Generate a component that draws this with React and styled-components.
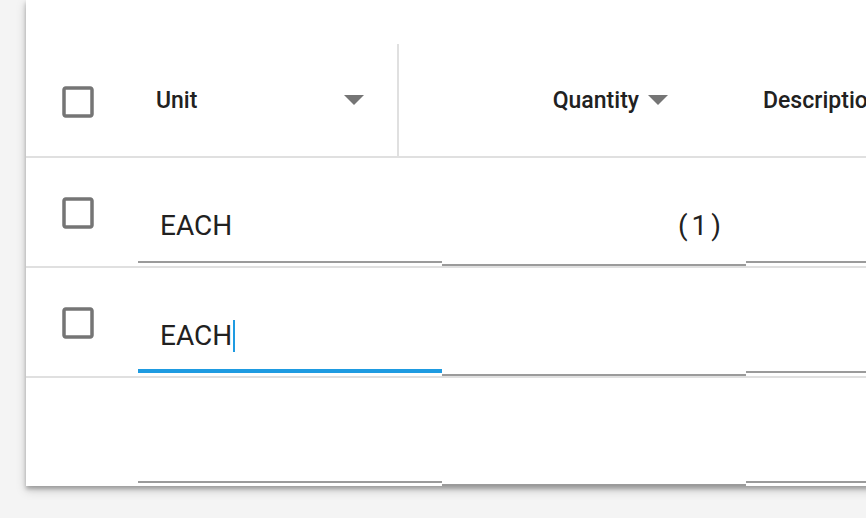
import styled, { createGlobalStyle } from "styled-components"

const GlobalStyle = createGlobalStyle`
    html, body {
        margin: 0;
        background: #f4f4f4;
        font-family: Roboto, "Noto Sans", sans-serif;
        overflow: hidden;
    }
    body {
        min-height: 518px;
    }
`

const Page = styled.div`
    padding: 0 0 32px 26px;
`

const Card = styled.div`
    width: 1000px;
    padding-top: 44px;
    background: #fff;
    box-shadow: 0 4px 10px rgba(0, 0, 0, 0.18), 0 3px 4px rgba(0, 0, 0, 0.26);
`

const HeaderRow = styled.div`
    display: flex;
    height: 112px;
    border-bottom: 2px solid #e0e0e0;
`

const HeadCheck = styled.div`
    width: 104px;
    padding-left: 30.75px;
    box-sizing: border-box;
    display: flex;
    align-items: center;
    padding-top: 4px;
`

const HeadCell = styled.div`
    display: flex;
    align-items: center;
    box-sizing: border-box;
    width: ${(p) => p.$width || "auto"};
    padding: 0 ${(p) => p.$right || 0}px 0 ${(p) => p.$left || 0}px;
    justify-content: ${(p) => p.$justify || "flex-start"};
    gap: ${(p) => p.$gap || 0}px;
    border-right: ${(p) => (p.$divider ? "2px solid #e0e0e0" : "none")};
    font-family: "Roboto Medium", Roboto, "Noto Sans", sans-serif;
    font-size: 23px;
    font-weight: 500;
    color: #212121;
    white-space: nowrap;
`

const Row = styled.div`
    display: flex;
    align-items: flex-start;
    height: 108px;
    & + & {
        border-top: 2px solid #e0e0e0;
    }
`

const RowCheck = styled.div`
    width: 112px;
    box-sizing: border-box;
    padding: 33.75px 0 0 30.75px;
    height: 100%;
`

const Field = styled.div`
    box-sizing: border-box;
    width: ${(p) => (p.$grow ? "auto" : "304px")};
    flex: ${(p) => (p.$grow ? 1 : "none")};
    height: ${(p) => (p.$numeric ? 108 : 105)}px;
    padding: 52px ${(p) => (p.$numeric ? 21 : 0)}px 0 22px;
    border-bottom: ${(p) => (p.$focused ? "4px solid #1e9be1" : "2px solid #9b9b9b")};
    display: flex;
    justify-content: ${(p) => (p.$numeric ? "flex-end" : "flex-start")};
    font-size: 28px;
    line-height: 32px;
    letter-spacing: ${(p) => (p.$numeric ? "4px" : "normal")};
    color: #212121;
`

const Caret = styled.span`
    display: inline-block;
    width: 1.5px;
    height: 32px;
    margin-left: 1px;
    background: #1e9be1;
`

const Checkbox = () => (
    <svg width="42" height="42" viewBox="0 0 24 24" style={{ display: "block" }}>
        <path
            fill="#757575"
            d="M19 5v14H5V5h14m0-2H5c-1.11 0-2 .9-2 2v14c0 1.1.89 2 2 2h14c1.1 0 2-.9 2-2V5c0-1.1-.9-2-2-2z"
        />
    </svg>
)

const SortArrow = () => (
    <svg width="20" height="10" viewBox="0 0 20 10" style={{ display: "block", flex: "none" }}>
        <path fill="#757575" d="M0 0h20L10 10z" />
    </svg>
)

const rows = [
    { unit: "EACH", qty: "(1)" },
    { unit: "EACH", qty: "", focused: true },
    { unit: "", qty: "", empty: true },
]

const App = () => {
    return (
        <Page>
            <GlobalStyle />
            <Card>
                <HeaderRow>
                    <HeadCheck>
                        <Checkbox />
                    </HeadCheck>
                    <HeadCell $width="269px" $left={26} $right={33} $justify="space-between" $divider>
                        <span>Unit</span>
                        <SortArrow />
                    </HeadCell>
                    <HeadCell $width="340px" $right={71} $justify="flex-end" $gap={9}>
                        <span>Quantity</span>
                        <SortArrow />
                    </HeadCell>
                    <HeadCell $left={24}>Description</HeadCell>
                </HeaderRow>
                {rows.map((r, i) => (
                    <Row key={i}>
                        <RowCheck>{!r.empty && <Checkbox />}</RowCheck>
                        <Field $focused={r.focused}>
                            {r.unit}
                            {r.focused && <Caret />}
                        </Field>
                        <Field $numeric>{r.qty}</Field>
                        <Field $grow />
                    </Row>
                ))}
            </Card>
        </Page>
    )
}

export default App
